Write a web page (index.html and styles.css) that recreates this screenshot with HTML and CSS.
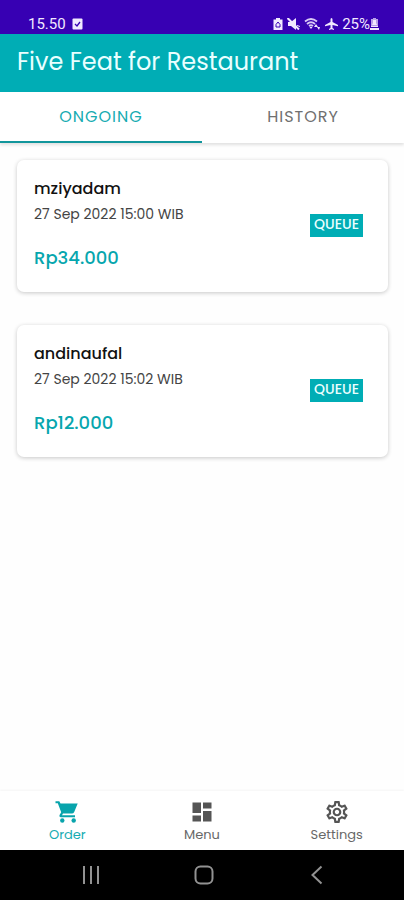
FILE: index.html
```
<!DOCTYPE html>
<html lang="en">
<head>
<meta charset="utf-8">
<meta name="viewport" content="width=device-width, initial-scale=1">
<title>Five Feat for Restaurant</title>
<link rel="stylesheet" href="styles.css">
</head>
<body>
<div class="status">
  <div class="status-group">
    <span>15.50</span>
    <svg width="11" height="12" viewBox="0 0 11 12"><rect x="0.5" y="0.5" width="10" height="11" rx="1" fill="#f1e9ff"/><path d="M3 6l2 2 3-4" fill="none" stroke="#3700b3" stroke-width="1.3"/></svg>
  </div>
  <div class="status-group status-right">
    <svg width="10" height="12" viewBox="0 0 10 12"><path d="M3 0h4v1.500h2.500V12h-9V1.500H3z" fill="#f1e9ff"/><path d="M5 4L3 6.500v2.500h4v-2.500z" fill="none" stroke="#3700b3"/></svg>
    <svg width="13" height="12" viewBox="0 0 13 12"><path d="M1 4h3l5-4v12L4 8H1zM10 7l3 1v1l-3-1z" fill="#f1e9ff"/><path d="M0.500 0l11.500 11.500" stroke="#f1e9ff" stroke-width="2"/></svg>
    <svg width="17" height="12" viewBox="0 0 17 12"><g fill="none" stroke="#d9c9f6" stroke-width="1.800"><path d="M1 3.500q6-5 12 0M3 6q4-3.500 8 0M5 8q2-1.500 4 0"/></g><path d="M5.500 9h3L7 11zM12 6l2 3h-4zM15 12l-2-3h3z" fill="#f1e9ff"/></svg>
    <svg width="13" height="12" viewBox="0 0 13 12"><path d="M6.500 0q1 0 1 1.500V4L13 7v1.200L7.500 7v3L9 11v1l-2.500-.7L4 12v-1l1.500-1V7L0 8.200V7l5.500-3V1.500q0-1.500 1-1.500z" fill="#f1e9ff"/></svg>
    <span class="battery">25%<svg width="9" height="12" viewBox="0 0 9 12"><path d="M3 0h3v1h2v8H1V1h2z" fill="#b9a0e8"/><path d="M3 2h3v3l1 2H2l1-2zM1 8h7v1H1zM0 10h9v2H0z" fill="#f1e9ff"/></svg></span>
  </div>
</div>
<header class="appbar"><h1>Five Feat for Restaurant</h1></header>
<div class="tabs" role="tablist">
  <button class="tab active" role="tab" aria-selected="true">ONGOING</button>
  <button class="tab" role="tab" aria-selected="false">HISTORY</button>
</div>
<main class="orders">
  <article class="card">
    <div>
      <h2>mziyadam</h2>
      <p class="date">27 Sep 2022 15:00 WIB</p>
      <p class="price">Rp34.000</p>
    </div>
    <span class="badge">QUEUE</span>
  </article>
  <article class="card">
    <div>
      <h2>andinaufal</h2>
      <p class="date">27 Sep 2022 15:02 WIB</p>
      <p class="price">Rp12.000</p>
    </div>
    <span class="badge">QUEUE</span>
  </article>
</main>
<nav class="bottom">
  <a class="item active" href="#order">
    <svg viewBox="0 0 24 24"><path d="M.5 1.200h3.800l1.200 2.300h17.200l-3.500 8.500q-.7 1.500-2.300 1.500H8l-1 1.800h13v2H6q-2.300-.3-1.300-2.500l1.500-2.600L2.800 3.200H.5z"/><circle cx="7.300" cy="20.500" r="2.200"/><circle cx="18.700" cy="20.500" r="2.200"/></svg>
    <span>Order</span>
  </a>
  <a class="item" href="#menu">
    <svg viewBox="0 0 24 24"><path d="M2.500 2.500h8.500v10.500H2.500zM2.500 15.500h8.500v6H2.500zM13 2.500h8.500v6H13zM13 11h8.500v10.500H13z"/></svg>
    <span>Menu</span>
  </a>
  <a class="item" href="#settings">
    <svg viewBox="1 1 22 22"><path d="M19.430 12.980c.04-.32.07-.64.07-.98 0-.34-.03-.66-.07-.98l2.110-1.650c.19-.15.24-.42.12-.64l-2-3.460c-.09-.16-.26-.25-.44-.25-.06 0-.12.01-.17.03l-2.490 1c-.52-.4-1.080-.73-1.690-.98l-.38-2.650C14.460 2.180 14.250 2 14 2h-4c-.25 0-.46.18-.49.42l-.38 2.650c-.61.25-1.170.59-1.690.98l-2.490-1c-.06-.02-.12-.03-.18-.03-.17 0-.34.09-.43.25l-2 3.460c-.13.22-.07.49.12.64l2.110 1.650c-.04.32-.07.65-.07.98 0 .33.03.66.07.98l-2.110 1.650c-.19.15-.24.42-.12.64l2 3.460c.09.16.26.25.44.25.06 0 .12-.01.17-.03l2.490-1c.52.4 1.080.73 1.690.98l.38 2.650c.03.24.24.42.49.42h4c.25 0 .46-.18.49-.42l.38-2.650c.61-.25 1.170-.59 1.690-.98l2.490 1c.06.02.12.03.18.03.17 0 .34-.09.43-.25l2-3.460c.12-.22.07-.49-.12-.64l-2.110-1.650zm-1.980-1.710c.04.31.05.52.05.73 0 .21-.02.43-.05.73l-.14 1.130.89.7 1.080.84-.7 1.210-1.270-.51-1.040-.42-.9.68c-.43.32-.84.56-1.250.73l-1.060.43-.16 1.130-.2 1.350h-1.400l-.19-1.350-.16-1.130-1.060-.43c-.43-.18-.83-.41-1.230-.71l-.91-.7-1.060.43-1.270.51-.7-1.210 1.080-.84.89-.7-.14-1.130c-.03-.31-.05-.54-.05-.74s.02-.43.05-.73l.14-1.130-.89-.7-1.080-.84.7-1.210 1.270.51 1.040.42.9-.68c.43-.32.84-.56 1.250-.73l1.060-.43.16-1.130.2-1.350h1.390l.19 1.350.16 1.130 1.060.43c.43.18.83.41 1.230.71l.91.7 1.060-.43 1.270-.51.7 1.210-1.070.85-.89.7.14 1.130zM12 8c-2.210 0-4 1.790-4 4s1.790 4 4 4 4-1.790 4-4-1.790-4-4-4zm0 6c-1.100 0-2-.9-2-2s.9-2 2-2 2 .9 2 2-.9 2-2 2z"/></svg>
    <span>Settings</span>
  </a>
</nav>
<div class="system">
  <button aria-label="Recent apps"><svg width="20" height="20" viewBox="0 0 20 20"><path d="M3 1v18M10 1v18M17 1v18"/></svg></button>
  <button aria-label="Home"><svg width="20" height="20" viewBox="0 0 20 20"><rect x="1.500" y="1.500" width="17" height="17" rx="5"/></svg></button>
  <button aria-label="Back"><svg width="20" height="20" viewBox="0 0 20 20"><path d="M14.500 1.500L5.500 10l9 8.500"/></svg></button>
</div>
</body>
</html>
```
FILE: styles.css
```
* { box-sizing: border-box; }
body {
  margin: 0;
  min-height: 100vh;
  display: flex;
  flex-direction: column;
  background: #fefefe;
  font-family: Poppins, Inter, sans-serif;
  color: #111;
}
h1, h2, p { margin: 0; font-weight: 400; }
button { border: 0; background: none; padding: 0; font: inherit; }
.status {
  display: flex;
  justify-content: space-between;
  padding: 14px 25px 0 28px;
  height: 34px;
  background: #3700b3;
  color: #f1e9ff;
  font: 15px/20px Roboto, sans-serif;
}
.status-group { display: flex; align-items: center; gap: 6px; }
.status-right { gap: 4px; }
.battery { display: flex; align-items: center; }
.appbar {
  padding: 12px 17px 14px;
  background: #00adb5;
  color: #e9ffff;
}
.appbar h1 { font-size: 24px; line-height: 32px; }
.tabs {
  display: flex;
  background: #fff;
  box-shadow: 0 2px 3px rgba(0, 0, 0, .12);
}
.tab {
  flex: 1;
  height: 51px;
  border-bottom: 2px solid transparent;
  font-size: 16px;
  letter-spacing: 1px;
  color: #707070;
}
.tab.active { color: #17acb2; border-color: #12969c; }
.orders {
  flex: 1;
  display: flex;
  flex-direction: column;
  gap: 33px;
  padding: 17px 16px 17px 17px;
}
.card {
  display: flex;
  align-items: center;
  justify-content: space-between;
  padding: 17px 25px 19px 17px;
  border-radius: 7px;
  background: #fff;
  box-shadow: 0 1px 4px rgba(0, 0, 0, .22);
}
.card h2 { font-size: 16px; line-height: 24px; font-weight: 500; }
.date { font-size: 14px; line-height: 26px; color: #444; }
.price { margin-top: 18px; font-size: 18px; line-height: 26px; font-weight: 500; color: #06a6ae; }
.card { padding-bottom: 21px; }
.badge {
  margin-top: 3px;
  padding: 0 4px 3px;
  background: #00adb5;
  color: #e9ffff;
  font-size: 14px;
  line-height: 20px;
  font-weight: 500;
}
.bottom {
  display: flex;
  height: 59px;
  background: #fff;
  box-shadow: 0 -1px 2px rgba(0, 0, 0, .04);
}
.item {
  flex: 1;
  display: flex;
  flex-direction: column;
  align-items: center;
  padding-top: 9px;
  gap: 3px;
  color: #686868;
  font-size: 13px;
  line-height: 16px;
  text-decoration: none;
}
.item svg { width: 24px; height: 24px; fill: #555; }
.item.active { color: #17acb2; }
.item.active svg { fill: #08a4ac; }
.system {
  display: flex;
  justify-content: center;
  gap: 93px;
  height: 50px;
  padding-left: 4px;
  background: #000;
}
.system svg { display: block; fill: none; stroke: #929292; stroke-width: 2; }
```
